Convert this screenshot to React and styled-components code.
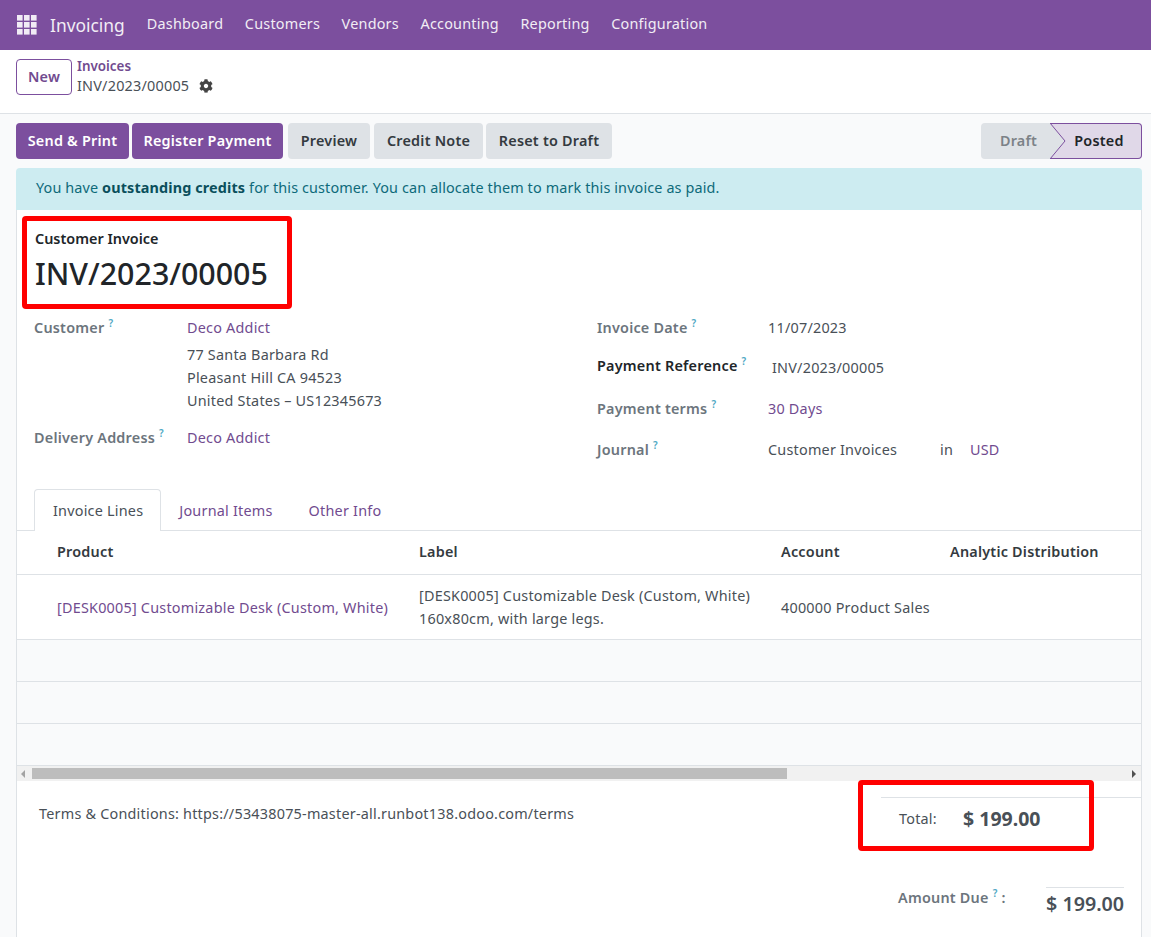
import React from "react";
import styled, { createGlobalStyle, css } from "styled-components";
import { FaCog } from "react-icons/fa";

const GlobalStyle = createGlobalStyle`
  html, body {
    margin: 0;
    padding: 0;
    height: 937px;
    overflow: hidden;
    background: #f9fafb;
    font-family: "Noto Sans", "Open Sans", sans-serif;
    font-size: 14.4px;
    letter-spacing: 0.22px;
    color: #495057;
  }
  * { box-sizing: border-box; }
`;

const purple = "#7c4f9e";
const link = "#714b8f";

const Page = styled.div`
  position: relative;
  height: 937px;
  overflow: hidden;
  display: flex;
  flex-direction: column;
`;

const Nav = styled.nav`
  height: 50px;
  flex: none;
  display: flex;
  align-items: center;
  background: ${purple};
  color: #fff;
  padding-left: 17px;
`;

const AppName = styled.span`
  font-size: 17.4px;
  letter-spacing: 0;
  margin-left: 13px;
  margin-right: 22px;
  opacity: 0.9;
`;

const NavItem = styled.span`
  margin-right: 21.6px;
  opacity: 0.9;
  padding-bottom: 3px;
`;

const ControlPanel = styled.div`
  height: 64px;
  flex: none;
  display: flex;
  align-items: flex-start;
  gap: 5px;
  background: #fff;
  border-bottom: 1px solid #dee2e6;
  padding: 9px 16px 0;
`;

const NewButton = styled.button`
  width: 56px;
  height: 36px;
  border: 1px solid ${purple};
  border-radius: 4px;
  background: #fff;
  color: ${link};
  font: 600 14.4px "Noto Sans", sans-serif;
  letter-spacing: 0.22px;
  padding: 0 0 2px;
`;

const Breadcrumb = styled.div`
  display: flex;
  flex-direction: column;
  line-height: 20px;
  margin-top: -3px;
`;

const CrumbLink = styled.span`
  color: ${link};
  font-size: 13.4px;
  font-weight: 600;
  letter-spacing: 0;
`;

const CrumbCurrent = styled.span`
  display: flex;
  align-items: center;
  gap: 10px;
  color: #495057;
  svg { width: 14px; height: 14px; color: #444; }
`;

const StatusRow = styled.div`
  display: flex;
  align-items: center;
  height: 36px;
  margin: 9px 9px 0 16px;
  flex: none;
`;

const ActionButton = styled.button`
  width: ${(p) => p.$width}px;
  height: 36px;
  border: 0;
  border-radius: 4px;
  margin-right: ${(p) => p.$gap || 3}px;
  padding: 0 0 2px;
  font: 600 14.4px "Noto Sans", sans-serif;
  letter-spacing: 0.22px;
  white-space: nowrap;
  ${(p) =>
    p.$primary
      ? css`
          background: ${purple};
          color: #fff;
        `
      : css`
          background: #dee2e6;
          color: #343a40;
        `}
`;

const StatusBar = styled.div`
  margin-left: auto;
  display: flex;
  height: 36px;
`;

const StatusDraft = styled.div`
  width: 69px;
  background: #dee2e6;
  color: #7c8288;
  font-weight: 600;
  border-radius: 4px 0 0 4px;
  display: flex;
  align-items: center;
  justify-content: center;
  padding: 0 0 2px 6px;
`;

const StatusPosted = styled.div`
  position: relative;
  width: 92px;
  background: #e0d8e8;
  color: #212529;
  font-weight: 600;
  border: 1px solid ${purple};
  border-left: 0;
  border-radius: 0 4px 4px 0;
  display: flex;
  align-items: center;
  justify-content: center;
  padding: 0 0 2px 7px;
`;

const StatusArrow = styled.svg`
  position: absolute;
  left: 0;
  top: -1px;
  width: 16px;
  height: 36px;
`;

const Alert = styled.div`
  height: 42px;
  flex: none;
  margin: 9px 9px 0 16px;
  background: #cdecf1;
  color: #0e6a7a;
  border-radius: 4px 4px 0 0;
  display: flex;
  align-items: center;
  padding: 0 0 3px 20px;
  letter-spacing: 0.13px;
  white-space: pre;
  b { font-weight: 700; color: #0a4f5c; }
`;

const Sheet = styled.div`
  flex: 1;
  margin: 0 9px 0 16px;
  background: #fff;
  border: 1px solid #dee2e6;
  border-top: 0;
  border-bottom: 0;
  display: flex;
  flex-direction: column;
`;

const Title = styled.div`
  padding: 20px 0 0 18px;
  height: 105px;
  flex: none;
`;

const TitleLabel = styled.div`
  font-weight: 600;
  letter-spacing: 0;
  color: #212529;
  line-height: 17px;
`;

const TitleName = styled.div`
  font-size: 30.4px;
  font-weight: 500;
  letter-spacing: 0;
  line-height: 42px;
  color: #212529;
  margin-top: 6px;
`;

const FormGrid = styled.div`
  display: grid;
  grid-template-columns: 563px 1fr;
  padding: 1px 0 0 17px;
  height: 174px;
  flex: none;
`;

const FormCol = styled.div`
  display: flex;
  flex-direction: column;
`;

const Field = styled.div`
  display: grid;
  grid-template-columns: ${(p) => p.$labelWidth}px 1fr;
  margin-bottom: ${(p) => p.$gap || 0}px;
  line-height: 23px;
`;

const Label = styled.div`
  font-weight: 600;
  color: ${(p) => (p.$strong ? "#212529" : "#6c757d")};
  white-space: nowrap;
`;

const Help = styled.sup`
  color: #4fa8c4;
  font-size: 10px;
  font-weight: 600;
  margin-left: 4px;
  line-height: 0;
`;

const Value = styled.div`
  color: ${(p) => (p.$link ? link : "#495057")};
  padding-left: ${(p) => p.$indent || 0}px;
  padding-top: ${(p) => p.$drop || 0}px;
  margin-bottom: ${(p) => p.$gap || 0}px;
  white-space: nowrap;
`;

const Journal = styled.div`
  display: grid;
  grid-template-columns: 172px 30px auto;
  justify-content: start;
`;

const Tabs = styled.div`
  height: 42px;
  flex: none;
  display: flex;
  border-bottom: 1px solid #dee2e6;
  padding-left: 17px;
`;

const Tab = styled.div`
  height: 42px;
  display: flex;
  align-items: center;
  padding: 0 18px;
  color: ${(p) => (p.$active ? "#495057" : link)};
  ${(p) =>
    p.$active &&
    css`
      padding: 0 17px 0 18px;
      background: #fff;
      border: 1px solid #dee2e6;
      border-bottom: 0;
      border-radius: 4px 4px 0 0;
    `}
`;

const Table = styled.div`
  flex: none;
  display: grid;
  grid-template-columns: 40px 362px 362px 169px 1fr;
`;

const HeadCell = styled.div`
  height: 44px;
  display: flex;
  align-items: center;
  font-weight: 600;
  color: #343a40;
  border-bottom: 1px solid #dee2e6;
  padding-bottom: 2px;
  white-space: nowrap;
`;

const Cell = styled.div`
  height: 65px;
  display: flex;
  align-items: center;
  border-bottom: 1px solid #dee2e6;
  line-height: 23px;
  color: ${(p) => (p.$link ? link : "#495057")};
  white-space: nowrap;
`;

const EmptyRow = styled.div`
  grid-column: 1 / -1;
  height: 42px;
  background: #f9fafb;
  border-bottom: 1px solid #dee2e6;
`;

const Scrollbar = styled.div`
  position: relative;
  height: 15px;
  flex: none;
  background: #f1f1f1;
  display: flex;
  align-items: center;
  justify-content: space-between;
  padding: 0 5px 0 4px;
`;

const ScrollThumb = styled.div`
  position: absolute;
  left: 15px;
  top: 2px;
  width: 755px;
  height: 11px;
  background: #bdbdbd;
`;

const ScrollArrow = styled.span`
  width: 0;
  height: 0;
  border-top: 4px solid transparent;
  border-bottom: 4px solid transparent;
  ${(p) =>
    p.$right
      ? css`
          border-left: 4px solid #505050;
        `
      : css`
          border-right: 4px solid #a3a3a3;
        `}
`;

const Footer = styled.div`
  flex: 1;
  display: flex;
  justify-content: space-between;
`;

const Terms = styled.div`
  padding: 23px 0 0 22px;
  line-height: 20px;
`;

const Totals = styled.div`
  width: 260px;
  margin-top: 16px;
  border-top: 1px solid #dee2e6;
`;

const TotalRow = styled.div`
  display: flex;
  align-items: center;
  padding-left: 18px;
  height: 40px;
`;

const TotalLabel = styled.span`
  width: 64px;
  color: #495057;
`;

const TotalValue = styled.span`
  font-size: 19.5px;
  font-weight: 700;
  letter-spacing: 0;
  color: #495057;
`;

const DueRow = styled.div`
  display: flex;
  margin-top: 49px;
  padding-left: 17px;
`;

const DueLabel = styled.div`
  width: 148px;
  padding-top: 1px;
  font-weight: 600;
  color: #6c757d;
  white-space: pre;
`;

const DueValue = styled.div`
  width: 78px;
  border-top: 1px solid #dee2e6;
  font-size: 19.7px;
  font-weight: 600;
  letter-spacing: 0;
  color: #495057;
  padding-top: 2px;
  white-space: nowrap;
`;

const Highlight = styled.div`
  position: absolute;
  left: ${(p) => p.$left}px;
  top: ${(p) => p.$top}px;
  width: ${(p) => p.$width}px;
  height: ${(p) => p.$height}px;
  border: 5px solid #ff0000;
  border-radius: 4px;
  pointer-events: none;
`;

const AppsIcon = () => (
  <svg width="20" height="20" viewBox="0 0 20 20" fill="#f1ecf5">
    {[0, 7, 14].flatMap((y) =>
      [0, 7, 14].map((x) => <rect key={`${x}-${y}`} x={x} y={y} width="5.6" height="5.6" />)
    )}
  </svg>
);

export default function App() {
  return (
    <Page>
      <GlobalStyle />
      <Nav>
        <AppsIcon />
        <AppName>Invoicing</AppName>
        {["Dashboard", "Customers", "Vendors", "Accounting", "Reporting", "Configuration"].map((item) => (
          <NavItem key={item}>{item}</NavItem>
        ))}
      </Nav>
      <ControlPanel>
        <NewButton>New</NewButton>
        <Breadcrumb>
          <CrumbLink>Invoices</CrumbLink>
          <CrumbCurrent>
            INV/2023/00005 <FaCog />
          </CrumbCurrent>
        </Breadcrumb>
      </ControlPanel>
      <StatusRow>
        <ActionButton $primary $width={113}>Send &amp; Print</ActionButton>
        <ActionButton $primary $width={151} $gap={5}>Register Payment</ActionButton>
        <ActionButton $width={82} $gap={4}>Preview</ActionButton>
        <ActionButton $width={109}>Credit Note</ActionButton>
        <ActionButton $width={126}>Reset to Draft</ActionButton>
        <StatusBar>
          <StatusDraft>Draft</StatusDraft>
          <StatusPosted>
            <StatusArrow viewBox="0 0 16 36">
              <path d="M0 0 L15 18 L0 36 Z" fill="#dee2e6" />
              <path d="M0 0 L15 18 L0 36" fill="none" stroke={purple} strokeWidth="1" />
            </StatusArrow>
            Posted
          </StatusPosted>
        </StatusBar>
      </StatusRow>
      <Alert>
        You have <b>outstanding credits</b> for this customer. You can allocate them to mark this invoice as paid.
      </Alert>
      <Sheet>
        <Title>
          <TitleLabel>Customer Invoice</TitleLabel>
          <TitleName>INV/2023/00005</TitleName>
        </Title>
        <FormGrid>
          <FormCol>
            <Field $labelWidth={153} $gap={14}>
              <Label>
                Customer<Help>?</Help>
              </Label>
              <div>
                <Value $link $gap={4}>Deco Addict</Value>
                <Value>77 Santa Barbara Rd</Value>
                <Value>Pleasant Hill CA 94523</Value>
                <Value>United States – US12345673</Value>
              </div>
            </Field>
            <Field $labelWidth={153}>
              <Label>
                Delivery Address<Help>?</Help>
              </Label>
              <Value $link>Deco Addict</Value>
            </Field>
          </FormCol>
          <FormCol>
            <Field $labelWidth={171} $gap={15}>
              <Label>
                Invoice Date<Help>?</Help>
              </Label>
              <Value>11/07/2023</Value>
            </Field>
            <Field $labelWidth={171} $gap={18}>
              <Label $strong>
                Payment Reference<Help>?</Help>
              </Label>
              <Value $indent={4} $drop={2}>INV/2023/00005</Value>
            </Field>
            <Field $labelWidth={171} $gap={18}>
              <Label>
                Payment terms<Help>?</Help>
              </Label>
              <Value $link>30 Days</Value>
            </Field>
            <Field $labelWidth={171}>
              <Label>
                Journal<Help>?</Help>
              </Label>
              <Journal>
                <Value>Customer Invoices</Value>
                <Value>in</Value>
                <Value $link>USD</Value>
              </Journal>
            </Field>
          </FormCol>
        </FormGrid>
        <Tabs>
          <Tab $active>Invoice Lines</Tab>
          <Tab>Journal Items</Tab>
          <Tab>Other Info</Tab>
        </Tabs>
        <Table>
          <HeadCell />
          <HeadCell>Product</HeadCell>
          <HeadCell>Label</HeadCell>
          <HeadCell>Account</HeadCell>
          <HeadCell>Analytic Distribution</HeadCell>
          <Cell />
          <Cell $link>[DESK0005] Customizable Desk (Custom, White)</Cell>
          <Cell>
            <div>
              [DESK0005] Customizable Desk (Custom, White)
              <br />
              160x80cm, with large legs.
            </div>
          </Cell>
          <Cell>400000 Product Sales</Cell>
          <Cell />
          <EmptyRow />
          <EmptyRow />
          <EmptyRow />
        </Table>
        <Scrollbar>
          <ScrollArrow />
          <ScrollThumb />
          <ScrollArrow $right />
        </Scrollbar>
        <Footer>
          <Terms>Terms &amp; Conditions: https://53438075-master-all.runbot138.odoo.com/terms</Terms>
          <Totals>
            <TotalRow>
              <TotalLabel>Total:</TotalLabel>
              <TotalValue>$ 199.00</TotalValue>
            </TotalRow>
            <DueRow>
              <DueLabel>
                Amount Due<Help>?</Help> :
              </DueLabel>
              <DueValue>$ 199.00</DueValue>
            </DueRow>
          </Totals>
        </Footer>
      </Sheet>
      <Highlight $left={22} $top={216} $width={270} $height={93} />
      <Highlight $left={858} $top={780} $width={236} $height={71} />
    </Page>
  );
}
